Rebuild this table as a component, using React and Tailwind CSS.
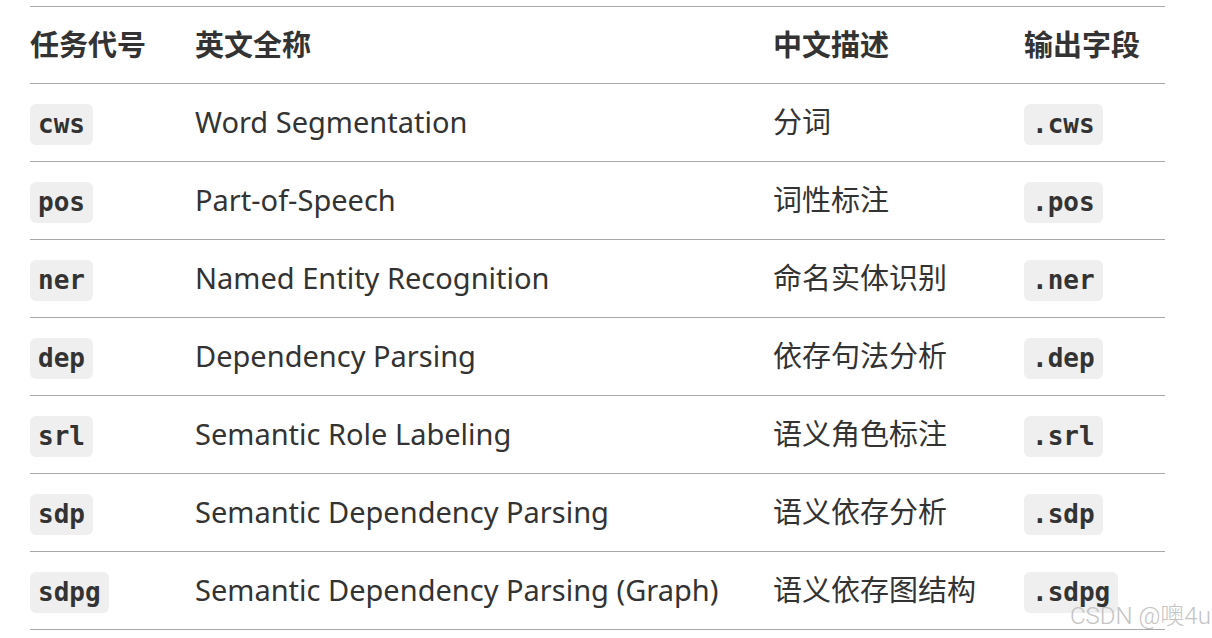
import React from "react";

const rows = [
  ["cws", "Word Segmentation", "分词", ".cws"],
  ["pos", "Part-of-Speech", "词性标注", ".pos"],
  ["ner", "Named Entity Recognition", "命名实体识别", ".ner"],
  ["dep", "Dependency Parsing", "依存句法分析", ".dep"],
  ["srl", "Semantic Role Labeling", "语义角色标注", ".srl"],
  ["sdp", "Semantic Dependency Parsing", "语义依存分析", ".sdp"],
  ["sdpg", "Semantic Dependency Parsing (Graph)", "语义依存图结构", ".sdpg"],
];

const sans = { fontFamily: '"Noto Sans", "Open Sans", "Noto Sans CJK SC", sans-serif' };
const mono = { fontFamily: '"DejaVu Sans Mono", "Liberation Mono", monospace' };

function Code({ children }) {
  return (
    <span
      className="inline-flex items-center h-[41px] px-[8px] rounded-[6px] bg-[#efefef] text-[#333] font-bold text-[26px] leading-none"
      style={mono}
    >
      {children}
    </span>
  );
}

export default function App() {
  return (
    <div className="relative w-[1212px] h-[638px] bg-white overflow-hidden" style={sans}>
      <div className="pt-[6px] pl-[30px]">
        <div className="w-[1135px] border-t border-[#a8a8a8]">
          <div className="grid grid-cols-[165px_578px_251px_141px] h-[77px] items-center border-b border-[#a8a8a8] text-[29px] font-bold text-[#333]">
            <div>任务代号</div>
            <div>英文全称</div>
            <div>中文描述</div>
            <div>输出字段</div>
          </div>
          {rows.map((r) => (
            <div
              key={r[0]}
              className="grid grid-cols-[165px_578px_251px_141px] h-[78px] items-center border-b border-[#a8a8a8] text-[29px] text-[#333]"
            >
              <div>
                <Code>{r[0]}</Code>
              </div>
              <div className="whitespace-nowrap pb-[2px]">{r[1]}</div>
              <div className="whitespace-nowrap pb-[2px]">{r[2]}</div>
              <div>
                <Code>{r[3]}</Code>
              </div>
            </div>
          ))}
        </div>
      </div>
      <div
        className="absolute left-[1070px] top-[604px] text-[24px] leading-none text-[#c4c4c4] whitespace-nowrap"
        style={{ fontFamily: 'Roboto, "Noto Sans CJK SC", sans-serif', fontWeight: 300 }}
      >
        CSDN @噢4u
      </div>
    </div>
  );
}
